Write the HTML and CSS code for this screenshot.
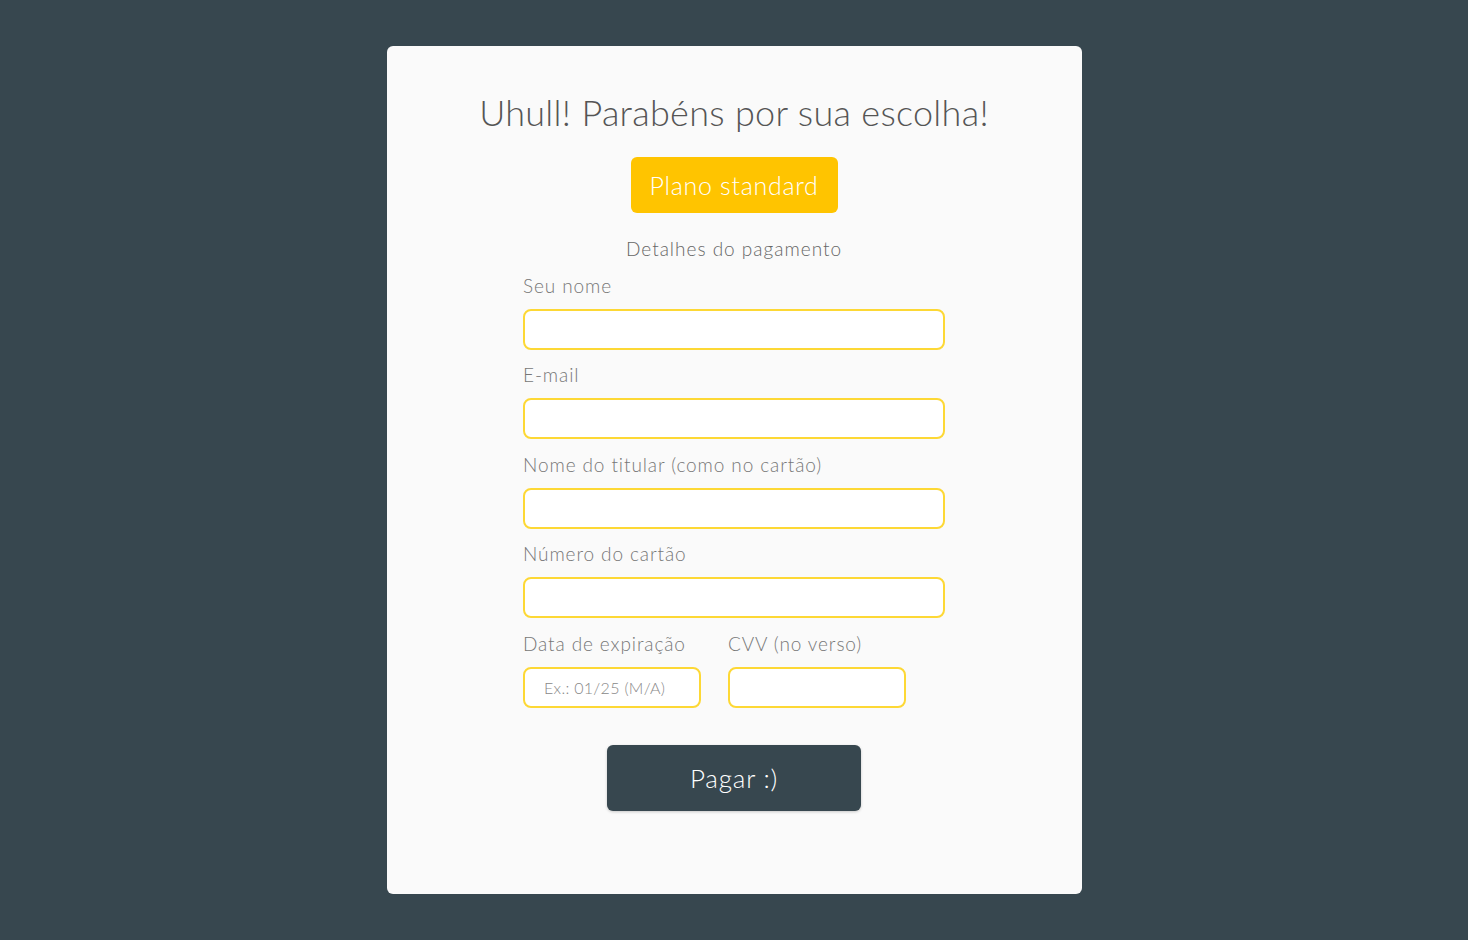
FILE: index.html
```html
<!DOCTYPE html>
<html lang="pt-BR">
<head>
<meta charset="utf-8">
<title>Pagamento</title>
<link rel="stylesheet" href="styles.css">
</head>
<body>
<main class="page">
  <section class="card">
    <h1 class="title">Uhull! Parabéns por sua escolha!</h1>
    <div class="plan">Plano standard</div>
    <p class="subtitle">Detalhes do pagamento</p>
    <form class="form">
      <label class="field">
        <span class="label">Seu nome</span>
        <input class="input" type="text">
      </label>
      <label class="field">
        <span class="label">E-mail</span>
        <input class="input" type="email">
      </label>
      <label class="field">
        <span class="label">Nome do titular (como no cartão)</span>
        <input class="input" type="text">
      </label>
      <label class="field">
        <span class="label">Número do cartão</span>
        <input class="input" type="text">
      </label>
      <div class="row">
        <label class="field small">
          <span class="label">Data de expiração</span>
          <input class="input" type="text" placeholder="Ex.: 01/25 (M/A)">
        </label>
        <label class="field small">
          <span class="label">CVV (no verso)</span>
          <input class="input" type="text">
        </label>
      </div>
      <button class="pay" type="button">Pagar :)</button>
    </form>
  </section>
</main>
</body>
</html>
```

FILE: styles.css
```css
* { box-sizing: border-box; }
html, body { margin: 0; padding: 0; }
body {
  background: #37474f;
  font-family: "Lato", "Open Sans", sans-serif;
  font-weight: 300;
  height: 940px;
}
.page {
  display: flex;
  justify-content: center;
  padding-top: 46px;
}
.card {
  width: 695px;
  height: 848px;
  background: #fafafa;
  border-radius: 6px;
  display: flex;
  flex-direction: column;
  align-items: center;
  padding-top: 46px;
}
.title {
  margin: 0;
  font-size: 36px;
  font-weight: 300;
  color: #555;
  line-height: 40px;
  letter-spacing: 0.3px;
}
.plan {
  margin-top: 25px;
  width: 207px;
  height: 56px;
  background: #ffc400;
  color: #fff;
  border-radius: 6px;
  font-size: 25px;
  display: flex;
  align-items: center;
  justify-content: center;
  letter-spacing: 0.7px;
}
.subtitle {
  margin: 24px 0 0;
  font-size: 19px;
  line-height: 24px;
  color: #666;
  letter-spacing: 1px;
}
.form {
  width: 422px;
  display: flex;
  flex-direction: column;
  margin-top: -1px;
}
.field {
  display: flex;
  flex-direction: column;
}
.label {
  font-size: 19px;
  line-height: 24px;
  color: #777;
  letter-spacing: 0.9px;
  margin-bottom: 11px;
  margin-top: 13.5px;
}
.input {
  height: 41px;
  width: 100%;
  border: 2px solid #fdd835;
  border-radius: 8px;
  background: #fff;
  font-family: inherit;
  font-size: 16px;
  letter-spacing: 0.3px;
  padding: 0 19px;
  outline: none;
}
.input::placeholder {
  color: #888;
  font-weight: 300;
}
.row {
  display: flex;
  gap: 27px;
}
.field.small { width: 178px; }
.pay {
  align-self: center;
  margin-top: 37px;
  width: 254px;
  height: 66px;
  background: #37474f;
  color: #fff;
  border: none;
  border-radius: 6px;
  font-family: inherit;
  font-weight: 300;
  font-size: 26px;
  letter-spacing: 0.8px;
  box-shadow: 0 1px 3px rgba(0,0,0,0.2);
}
```
